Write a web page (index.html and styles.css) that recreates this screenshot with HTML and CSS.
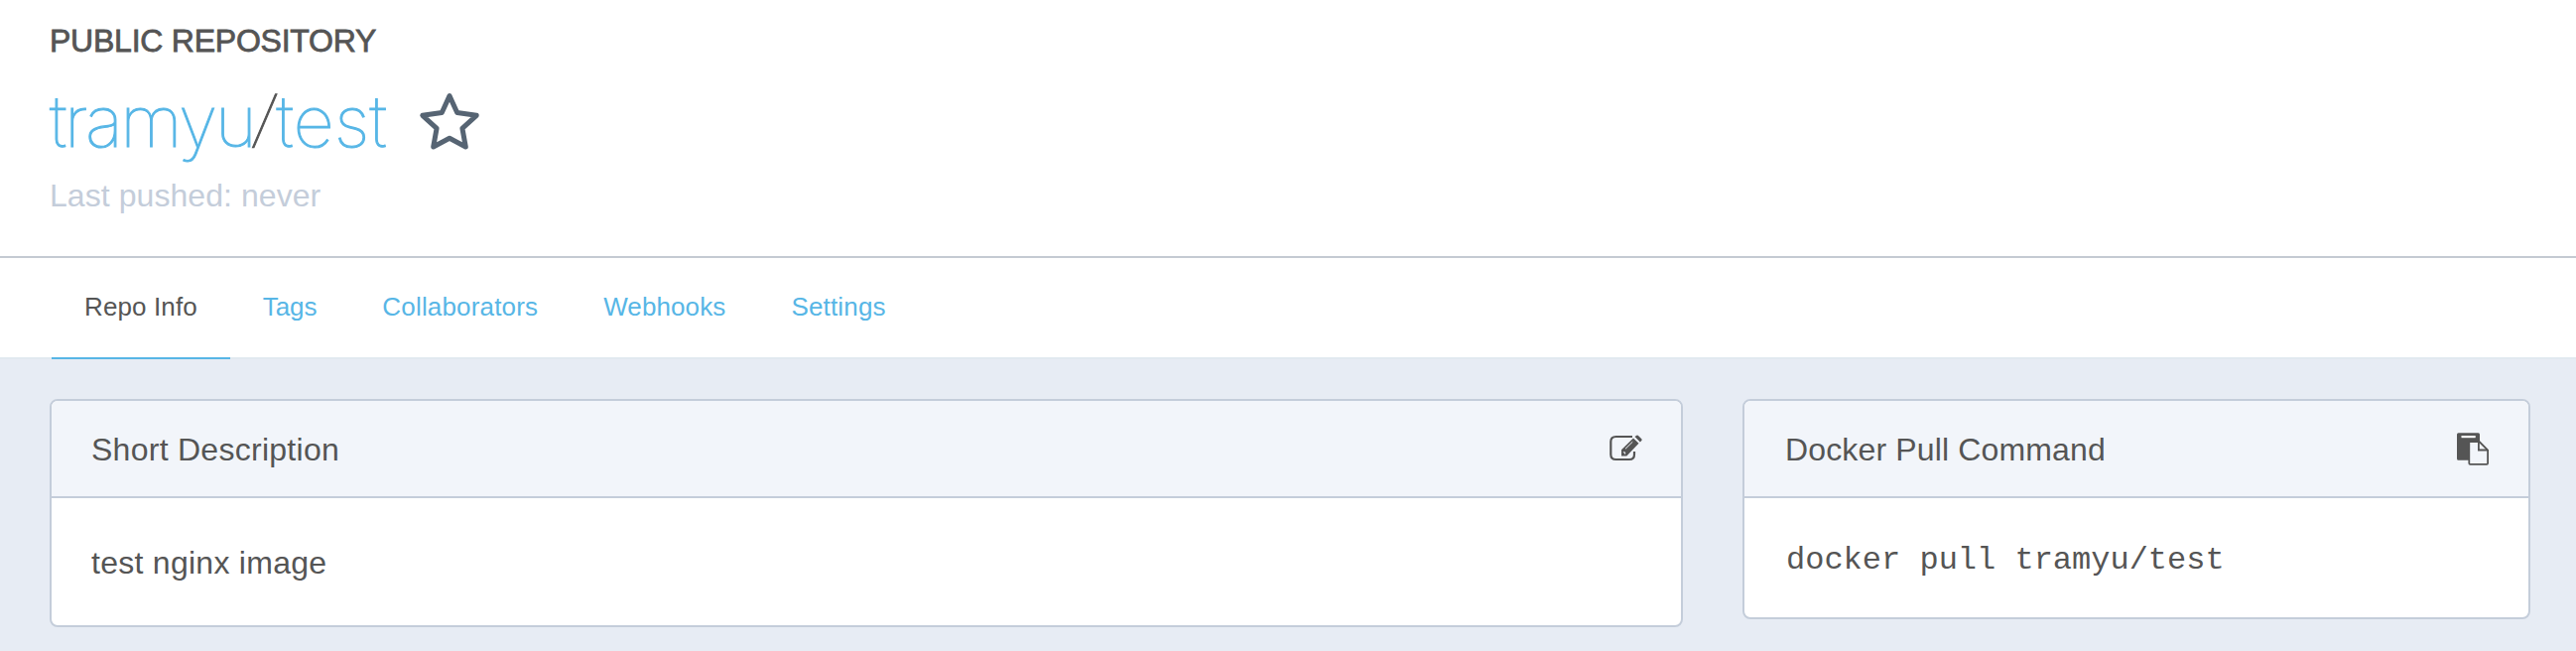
FILE: index.html
```
<!DOCTYPE html>
<html lang="en">
<head>
<meta charset="utf-8">
<title>tramyu/test</title>
<link rel="stylesheet" href="styles.css">
</head>
<body>
<header class="repo-header">
  <div class="visibility">PUBLIC REPOSITORY</div>
  <h1 class="repo-title">
    <span class="repo-name"><a class="owner" href="#">tramyu</a><span class="slash">/</span><a class="name" href="#">test</a></span>
    <svg class="star" width="64" height="62" viewBox="0 0 64 62"><path d="M32 5.600 39.700 22.500 59.200 25.300 44.900 38.300 48.300 57 32 48.300 15.700 57 19.100 38.300 4.800 25.300 24.300 22.500Z"/></svg>
  </h1>
  <div class="pushed">Last pushed: never</div>
</header>
<nav class="tabs">
  <a class="tab wide active" href="#">Repo Info</a>
  <a class="tab" href="#">Tags</a>
  <a class="tab wide" href="#">Collaborators</a>
  <a class="tab hooks" href="#">Webhooks</a>
  <a class="tab wide" href="#">Settings</a>
</nav>
<main class="content">
  <section class="card description">
    <div class="card-head">
      <span>Short Description</span>
      <svg class="icon" width="36" height="34" viewBox="0 0 36 34">
        <path class="line" d="M25 5H8.500Q3.300 5 3.300 10V23Q3.300 28 8.500 28H22Q27 28 27 23V20"/>
        <path d="M14 18.300 26 6.400 31.500 11.800 19.300 24.500H14Z"/>
        <path d="M27.500 4.900 29.400 3.800Q30.200 3.300 31 4L34.300 7.200Q35 8 34.500 8.800L32.900 10.600Z"/>
        <path class="shine" d="M18 17.300 25.300 10.200M15.800 20.800H17.600V22.600"/>
      </svg>
    </div>
    <div class="card-body">test nginx image</div>
  </section>
  <section class="card command">
    <div class="card-head">
      <span>Docker Pull Command</span>
      <svg class="icon" width="36" height="34" viewBox="0 0 36 34">
        <path d="M3.500 1.300H23.500Q25 1.300 25 2.800V9H15V28.700H3.500Q2 28.700 2 27.200V2.800Q2 1.300 3.500 1.300Z"/>
        <rect class="slot" x="6.500" y="4" width="14.200" height="2.200"/>
        <path class="sheet" d="M14.300 10H24.500L33.100 18.600V31.800Q33.100 32.800 32.100 32.800H15.300Q14.300 32.800 14.300 31.800Z"/>
        <path class="fold" d="M23.900 10V18.500H33"/>
      </svg>
    </div>
    <div class="card-body"><code>docker pull tramyu/test</code></div>
  </section>
</main>
</body>
</html>
```
FILE: styles.css
```
* { box-sizing: border-box; }
body { margin: 0; background: #fff; color: #555; font: 32px/40px "Liberation Sans", Arial, sans-serif; }
a { color: #57b6e6; text-decoration: none; }

.repo-header { height: 260px; padding: 21px 50px 0; border-bottom: 2px solid #c4cad2; }
.visibility { letter-spacing: -0.24px; -webkit-text-stroke: 0.8px #555; }
.repo-title { display: flex; margin: 16px 0 10px; font: 100 72px/90px Inter, sans-serif; }
.repo-name { display: flex; flex: 0 0 370.7px; -webkit-text-stroke: 1.1px; }
.owner { width: 206px; letter-spacing: -2.4px; }
.slash { width: 22.5px; font-size: 62px; transform: translate(1px, -2px) skewX(-9deg); }
.name { letter-spacing: 0.1px; }
.star { flex: none; margin-top: 14px; fill: none; stroke: #566473; stroke-width: 5; stroke-linejoin: round; }
.pushed { color: #c4cdda; letter-spacing: 0.06px; }

.tabs { display: flex; height: 102px; padding-left: 52px; border-bottom: 2px solid #e1e9f0; font-size: 26px; line-height: 98px; }
.tab { height: 102px; padding: 0 33px; letter-spacing: -0.1px; }
.wide { letter-spacing: 0.17px; }
.hooks { letter-spacing: 0.1px; }
.active { color: #555; letter-spacing: 0.12px; border-bottom: 2px solid #57b6e6; }

.content { display: flex; align-items: flex-start; gap: 60px; height: 294px; padding: 40px 46px 0 50px; background: #e7ecf4; }
.card { border: 2px solid #c4cdda; border-radius: 8px; background: #fff; overflow: hidden; letter-spacing: 0.27px; }
.description { width: 1646px; height: 230px; }
.command { width: 794px; height: 222px; }
.card-head { display: flex; align-items: center; justify-content: space-between; height: 98px; padding: 0 38px 0 40px; border-bottom: 2px solid #c4cdda; background: #f2f5fa; }
.card-head span { padding-top: 2px; }
.card-body { padding: 45px 40px 0; }
.command .card-head { padding-left: 41px; letter-spacing: 0.15px; }
.command .card-body { padding: 40px 42px 0; letter-spacing: 0; }
code { font: 32px/40px "Liberation Mono", "Courier New", monospace; }

.icon { flex: none; fill: #555; }
.line { fill: none; stroke: #555; stroke-width: 2.2; }
.shine { fill: none; stroke: #f2f5fa; stroke-width: 1; }
.slot { fill: #fff; }
.sheet { fill: #f2f5fa; stroke: #555; stroke-width: 1.8; }
.fold { fill: none; stroke: #555; stroke-width: 1.8; }
```
